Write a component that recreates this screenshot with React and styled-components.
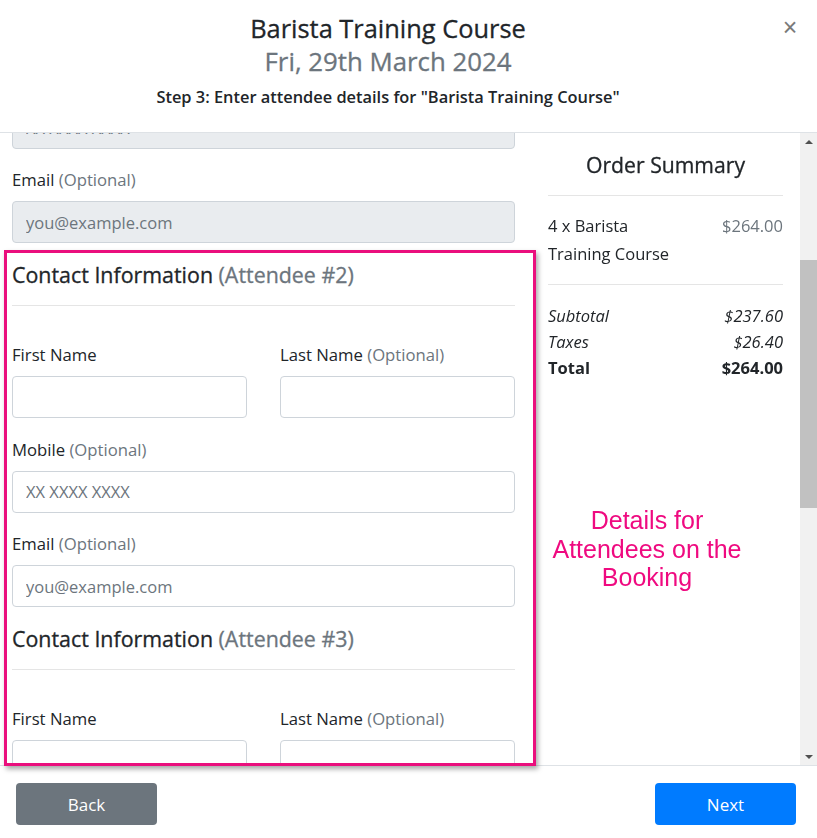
import React, { useLayoutEffect, useRef } from "react";
import styled, { createGlobalStyle } from "styled-components";

const GlobalStyle = createGlobalStyle`
  html, body {
    margin: 0;
    padding: 0;
    background: #fff;
  }
  body {
    font-family: "Open Sans", "Noto Sans", sans-serif;
    color: #212529;
  }
  * {
    box-sizing: border-box;
  }
`;

const attendees = [1, 2, 3, 4];

const App = () => {
  const scrollRef = useRef(null);

  // scroll the attendee list to where the screenshot was taken
  useLayoutEffect(() => {
    if (scrollRef.current) scrollRef.current.scrollTop = 280;
  }, []);

  return (
    <>
      <GlobalStyle />
      <Modal>
        <Header>
          <HeaderText>
            <Title>Barista Training Course</Title>
            <SubTitle>Fri, 29th March 2024</SubTitle>
            <Step>Step 3: Enter attendee details for "Barista Training Course"</Step>
          </HeaderText>
          <Close aria-label="Close">×</Close>
        </Header>

        <Body>
          <ScrollArea ref={scrollRef}>
            <Columns>
              <FormColumn>
                {attendees.map((n) => (
                  <Section key={n}>
                    <SectionTitle>
                      Contact Information <Muted>(Attendee #{n})</Muted>
                    </SectionTitle>
                    <Rule />
                    <Fields>
                      <FieldRow>
                        <Field>
                          <Label>First Name</Label>
                          <Input disabled={n === 1} />
                        </Field>
                        <Field>
                          <Label>
                            Last Name <Muted>(Optional)</Muted>
                          </Label>
                          <Input disabled={n === 1} />
                        </Field>
                      </FieldRow>
                      <Field>
                        <Label>
                          Mobile <Muted>(Optional)</Muted>
                        </Label>
                        <Input disabled={n === 1} placeholder="XX XXXX XXXX" />
                      </Field>
                      <Field>
                        <Label>
                          Email <Muted>(Optional)</Muted>
                        </Label>
                        <Input disabled={n === 1} placeholder="you@example.com" />
                      </Field>
                    </Fields>
                  </Section>
                ))}
              </FormColumn>

              <Summary>
                <SummaryTitle>Order Summary</SummaryTitle>
                <SummaryRule />
                <ItemRow>
                  <ItemName>4 x Barista Training Course</ItemName>
                  <ItemPrice>$264.00</ItemPrice>
                </ItemRow>
                <SummaryRule />
                <Totals>
                  <TotalRow italic>
                    <span>Subtotal</span>
                    <span>$237.60</span>
                  </TotalRow>
                  <TotalRow italic>
                    <span>Taxes</span>
                    <span>$26.40</span>
                  </TotalRow>
                  <TotalRow bold>
                    <span>Total</span>
                    <span>$264.00</span>
                  </TotalRow>
                </Totals>
              </Summary>
            </Columns>
          </ScrollArea>

          <Scrollbar>
            <ScrollButton>
              <Arrow />
            </ScrollButton>
            <Track>
              <Thumb />
            </Track>
            <ScrollButton>
              <Arrow down />
            </ScrollButton>
          </Scrollbar>
        </Body>

        <Footer>
          <Button variant="secondary">Back</Button>
          <Button variant="primary">Next</Button>
        </Footer>

        <Highlight />
        <Note>
          Details for
          <br />
          Attendees on the
          <br />
          Booking
        </Note>
      </Modal>
    </>
  );
};

const Modal = styled.div`
  position: relative;
  width: 817px;
  height: 838px;
  display: flex;
  flex-direction: column;
  background: #fff;
  overflow: hidden;
`;

const Header = styled.header`
  flex: none;
  height: 133px;
  display: flex;
  align-items: flex-start;
  border-bottom: 1px solid #dee2e6;
`;

const HeaderText = styled.div`
  flex: 1;
  padding-top: 12px;
  text-align: center;
`;

const Title = styled.h1`
  margin: 0;
  font-size: 25.4px;
  line-height: 33px;
  font-weight: 400;
  -webkit-text-stroke: 0.3px currentColor;
  color: #212529;
`;

const SubTitle = styled.h2`
  margin: 0;
  font-size: 25.8px;
  line-height: 33px;
  font-weight: 400;
  -webkit-text-stroke: 0.3px currentColor;
  color: #6c757d;
`;

const Step = styled.p`
  margin: 7px 0 0;
  font-size: 16.4px;
  line-height: 24px;
  font-weight: 600;
  color: #212529;
`;

const Close = styled.button`
  flex: none;
  width: 28px;
  margin: 11px 13px 0 0;
  border: 0;
  background: none;
  padding: 0;
  font-family: "Liberation Sans", Arial, sans-serif;
  font-size: 25px;
  line-height: 32px;
  font-weight: 400;
  color: #7a7a7a;
  cursor: pointer;
`;

const Body = styled.div`
  flex: none;
  height: 632px;
  display: flex;
`;

const ScrollArea = styled.div`
  flex: 1;
  overflow: hidden;
`;

const Scrollbar = styled.div`
  width: 17px;
  flex: none;
  display: flex;
  flex-direction: column;
  background: #f1f1f1;
`;

const ScrollButton = styled.div`
  height: 17px;
  flex: none;
  display: flex;
  align-items: center;
  justify-content: center;
`;

const Arrow = styled.span`
  width: 0;
  height: 0;
  border-left: 4px solid transparent;
  border-right: 4px solid transparent;
  ${(p) =>
    p.down ? "border-top: 4px solid #505050;" : "border-bottom: 4px solid #505050;"}
`;

const Track = styled.div`
  flex: 1;
  padding-top: 110px;
`;

const Thumb = styled.div`
  height: 248px;
  background: #c1c1c1;
`;

const Columns = styled.div`
  display: flex;
  align-items: flex-start;
  gap: 33px;
  padding: 0 0 0 12px;
`;

const FormColumn = styled.div`
  width: 503px;
  flex: none;
  padding: 46px 0 43px;
`;

const Section = styled.section`
  & + & {
    margin-top: 20px;
  }
`;

const SectionTitle = styled.h3`
  margin: 0;
  font-size: 21.4px;
  line-height: 24px;
  font-weight: 400;
  -webkit-text-stroke: 0.3px currentColor;
  color: #212529;
`;

const Muted = styled.span`
  color: #6c757d;
`;

const Rule = styled.hr`
  margin: 18px 0 0;
  border: 0;
  border-top: 1px solid #e5e5e5;
`;

const Fields = styled.div`
  display: flex;
  flex-direction: column;
  gap: 19.5px;
  margin-top: 37px;
`;

const FieldRow = styled.div`
  display: grid;
  grid-template-columns: 1fr 1fr;
  gap: 33px;
`;

const Field = styled.div``;

const Label = styled.label`
  display: block;
  margin-bottom: 9px;
  font-size: 16.7px;
  line-height: 24px;
  color: #212529;
`;

const Input = styled.input`
  display: block;
  width: 100%;
  height: 42px;
  padding: 0 13px;
  border: 1px solid #ced4da;
  border-radius: 4px;
  background: #fff;
  font-family: inherit;
  font-size: 16.5px;
  color: #495057;

  &::placeholder {
    color: #6c757d;
  }
  &:disabled {
    background: #e9ecef;
  }
`;

const Summary = styled.aside`
  position: sticky;
  top: 0;
  width: 235px;
  flex: none;
  padding-top: 18px;
`;

const SummaryTitle = styled.h3`
  margin: 0;
  text-align: center;
  font-size: 21.2px;
  line-height: 28px;
  font-weight: 400;
  -webkit-text-stroke: 0.3px currentColor;
  color: #212529;
`;

const SummaryRule = styled.hr`
  margin: 16px 0;
  border: 0;
  border-top: 1px solid #e5e5e5;
`;

const ItemRow = styled.div`
  display: flex;
  justify-content: space-between;
  align-items: flex-start;
  font-size: 16.5px;
  line-height: 28px;
`;

const ItemName = styled.span`
  max-width: 135px;
  color: #212529;
`;

const ItemPrice = styled.span`
  color: #6c757d;
`;

const Totals = styled.div`
  padding-top: 2px;
`;

const TotalRow = styled.div`
  display: flex;
  justify-content: space-between;
  font-size: 16.5px;
  line-height: 26px;
  font-style: ${(p) => (p.italic ? "italic" : "normal")};
  font-weight: ${(p) => (p.bold ? 700 : 400)};
  color: #212529;
`;

const Footer = styled.footer`
  flex: none;
  height: 73px;
  border-top: 1px solid #dee2e6;
  display: flex;
  justify-content: space-between;
  align-items: flex-start;
  padding: 17px 21px 0 16px;
`;

const Button = styled.button`
  width: 141px;
  height: 42px;
  border: 0;
  border-radius: 4px;
  font-family: inherit;
  font-size: 17px;
  color: #fff;
  background: ${(p) => (p.variant === "primary" ? "#007bff" : "#6c757d")};
  cursor: pointer;
`;

// annotation overlay drawn on top of the screenshot
const Highlight = styled.div`
  position: absolute;
  left: 4px;
  top: 250px;
  width: 532px;
  height: 516px;
  border: 3px solid #ea0f7d;
  box-shadow: 2px 3px 5px rgba(0, 0, 0, 0.35);
  pointer-events: none;
`;

const Note = styled.div`
  position: absolute;
  left: 532px;
  top: 506px;
  width: 230px;
  text-align: center;
  font-family: "Liberation Sans", Arial, sans-serif;
  font-size: 25px;
  line-height: 28.5px;
  color: #ef0a80;
  pointer-events: none;
`;

export default App;
